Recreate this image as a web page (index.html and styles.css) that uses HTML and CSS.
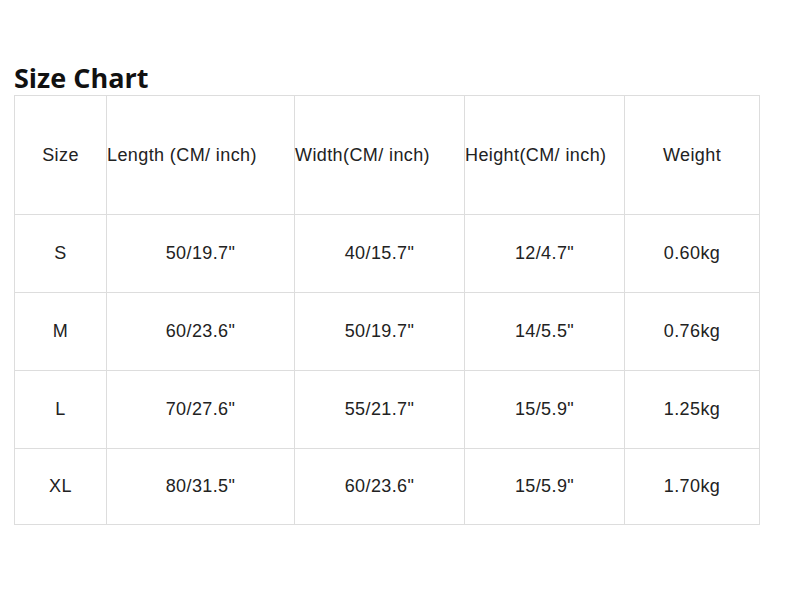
FILE: index.html
```html
<!DOCTYPE html>
<html>
<head>
<meta charset="utf-8">
<link rel="stylesheet" href="styles.css">
</head>
<body>
<div class="page">
  <h2 class="title">Size Chart</h2>
  <table class="chart">
    <colgroup>
      <col class="c1"><col class="c2"><col class="c3"><col class="c4"><col class="c5">
    </colgroup>
    <tr class="head">
      <td>Size</td>
      <td class="left">Length (CM/ inch)</td>
      <td class="left">Width(CM/ inch)</td>
      <td class="left">Height(CM/ inch)</td>
      <td>Weight</td>
    </tr>
    <tr class="row"><td>S</td><td>50/19.7"</td><td>40/15.7"</td><td>12/4.7"</td><td>0.60kg</td></tr>
    <tr class="row"><td>M</td><td>60/23.6"</td><td>50/19.7"</td><td>14/5.5"</td><td>0.76kg</td></tr>
    <tr class="row"><td>L</td><td>70/27.6"</td><td>55/21.7"</td><td>15/5.9"</td><td>1.25kg</td></tr>
    <tr class="row last"><td>XL</td><td>80/31.5"</td><td>60/23.6"</td><td>15/5.9"</td><td>1.70kg</td></tr>
  </table>
</div>
</body>
</html>
```
FILE: styles.css
```css
html, body {
  margin: 0;
  padding: 0;
  background: #fff;
}
.page {
  padding: 61px 0 0 14px;
}
.title {
  margin: 0;
  font-family: "Open Sans", sans-serif;
  font-weight: 700;
  font-size: 27px;
  line-height: 34px;
  color: #111;
}
.chart {
  border-collapse: collapse;
  table-layout: fixed;
  width: 745px;
  font-family: "Liberation Sans", Arial, sans-serif;
  font-size: 18px;
  letter-spacing: 0.4px;
  color: #222;
}
.c1 { width: 92px; }
.c2 { width: 188px; }
.c3 { width: 170px; }
.c4 { width: 160px; }
.c5 { width: 135px; }
.chart td {
  border: 1px solid #ddd;
  text-align: center;
  vertical-align: middle;
  padding: 0;
  white-space: nowrap;
}
.chart td.left {
  text-align: left;
}
.head td { height: 118px; }
.row td { height: 77px; }
.row.last td { height: 75px; }
```
